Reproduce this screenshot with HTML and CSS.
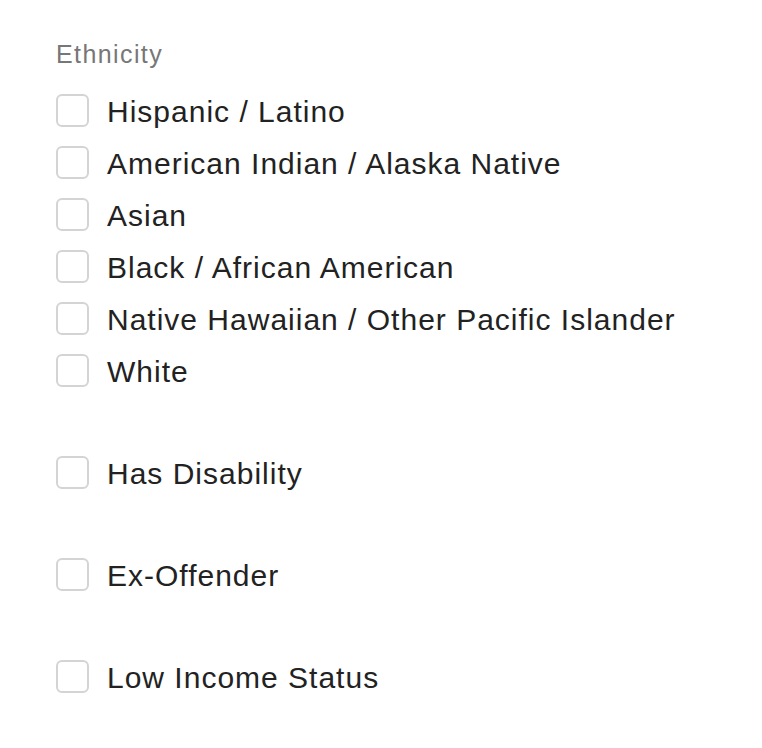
FILE: index.html
```html
<!DOCTYPE html>
<html lang="en">
<head>
    <meta charset="UTF-8">
    <meta name="viewport" content="width=device-width, initial-scale=1.0">
    <title>Demographics</title>
    <link rel="stylesheet" href="styles.css">
</head>
<body>
    <div class="form">
        <div class="field-label">Ethnicity</div>

        <div class="group">
            <label class="check"><input type="checkbox"><span class="box"></span><span class="text">Hispanic / Latino</span></label>
            <label class="check"><input type="checkbox"><span class="box"></span><span class="text">American Indian / Alaska Native</span></label>
            <label class="check"><input type="checkbox"><span class="box"></span><span class="text">Asian</span></label>
            <label class="check"><input type="checkbox"><span class="box"></span><span class="text">Black / African American</span></label>
            <label class="check"><input type="checkbox"><span class="box"></span><span class="text">Native Hawaiian / Other Pacific Islander</span></label>
            <label class="check"><input type="checkbox"><span class="box"></span><span class="text">White</span></label>
        </div>

        <div class="group">
            <label class="check"><input type="checkbox"><span class="box"></span><span class="text">Has Disability</span></label>
        </div>

        <div class="group">
            <label class="check"><input type="checkbox"><span class="box"></span><span class="text">Ex-Offender</span></label>
        </div>

        <div class="group">
            <label class="check"><input type="checkbox"><span class="box"></span><span class="text">Low Income Status</span></label>
        </div>
    </div>
</body>
</html>
```

FILE: styles.css
```css
body {
    margin: 0;
    padding: 0;
    background: #fff;
    font-family: 'Liberation Sans', Arial, sans-serif;
}

.form {
    padding: 39px 0 0 56px;
}

.field-label {
    font-size: 25px;
    line-height: 30px;
    letter-spacing: 1.4px;
    color: #777;
    margin-bottom: 15px;
}

.group {
    display: flex;
    flex-direction: column;
}

.group + .group {
    margin-top: 50px;
}

.check {
    display: flex;
    align-items: center;
    height: 52px;
    font-size: 30px;
    letter-spacing: 1px;
    color: #222;
    cursor: pointer;
}

.check input {
    display: none;
}

.text {
    padding-top: 4px;
}

.box {
    width: 33px;
    height: 33px;
    box-sizing: border-box;
    border: 2px solid #d4d4d4;
    border-radius: 6px;
    margin-right: 18px;
    flex-shrink: 0;
}
```
